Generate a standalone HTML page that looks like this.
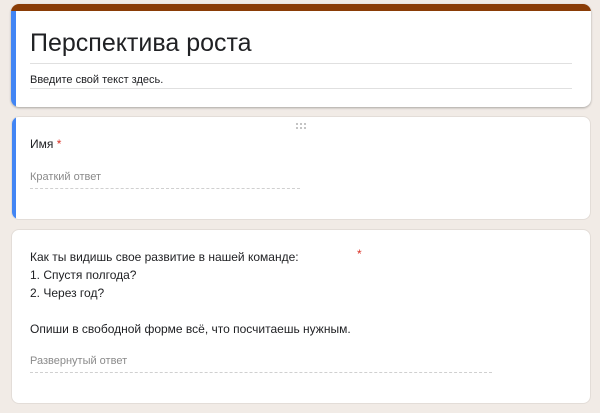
<!DOCTYPE html>
<html><head><meta charset="utf-8"><style>
body{margin:0;width:600px;height:413px;background:#f1ebe6;font-family:"Liberation Sans",sans-serif;position:relative;overflow:hidden;color:#202124}
.card{position:absolute;left:11px;width:580px;background:#fff;border-radius:8px;box-sizing:border-box;border:1px solid #e3ddd8}
.t{position:absolute;white-space:nowrap}
.line{position:absolute;height:1px;background:#e0e0e0}
.dash{position:absolute;height:0;border-top:1px dashed #d0d0d0}
.dot{position:absolute;width:2px;height:2px;background:#c4c4c4}
</style></head><body>
<div class="card" style="top:4px;height:103px;overflow:hidden;border:none;box-shadow:0 1px 2px rgba(0,0,0,.3)">
 <div style="position:absolute;left:0;top:0;right:0;height:7px;background:#8a3c06"></div>
 <div style="position:absolute;left:0;top:7px;bottom:0;width:5px;background:#4285f4"></div>
</div>
<div class="t" style="left:30px;top:29px;font-size:25px;">Перспектива роста</div>
<div class="line" style="left:30px;top:63px;width:542px"></div>
<div class="t" style="left:30px;top:74px;font-size:11px;">Введите свой текст здесь.</div>
<div class="line" style="left:30px;top:88px;width:542px"></div>

<div class="card" style="top:116px;height:104px;overflow:hidden">
 <div style="position:absolute;left:-1px;top:0;bottom:0;width:5px;background:#4285f4"></div>
</div>
<div class="dot" style="left:296px;top:123px"></div><div class="dot" style="left:300px;top:123px"></div><div class="dot" style="left:304px;top:123px"></div>
<div class="dot" style="left:296px;top:127px"></div><div class="dot" style="left:300px;top:127px"></div><div class="dot" style="left:304px;top:127px"></div>
<div class="t" style="left:30px;top:137px;font-size:12px;">Имя <span style="color:#d93025">*</span></div>
<div class="t" style="left:30px;top:171px;font-size:11px;color:#8a8a8a">Краткий ответ</div>
<div class="dash" style="left:30px;top:188px;width:270px"></div>

<div class="card" style="top:229px;height:175px"></div>
<div class="t" style="left:30px;top:248px;font-size:12px;line-height:18px">Как ты видишь свое развитие в нашей команде:<br>1. Спустя полгода?<br>2. Через год?<br><br>Опиши в свободной форме всё, что посчитаешь нужным.</div>
<div class="t" style="left:357px;top:247px;font-size:12px;color:#d93025">*</div>
<div class="t" style="left:30px;top:355px;font-size:11px;color:#8a8a8a">Развернутый ответ</div>
<div class="dash" style="left:30px;top:372px;width:462px"></div>
</body></html>
